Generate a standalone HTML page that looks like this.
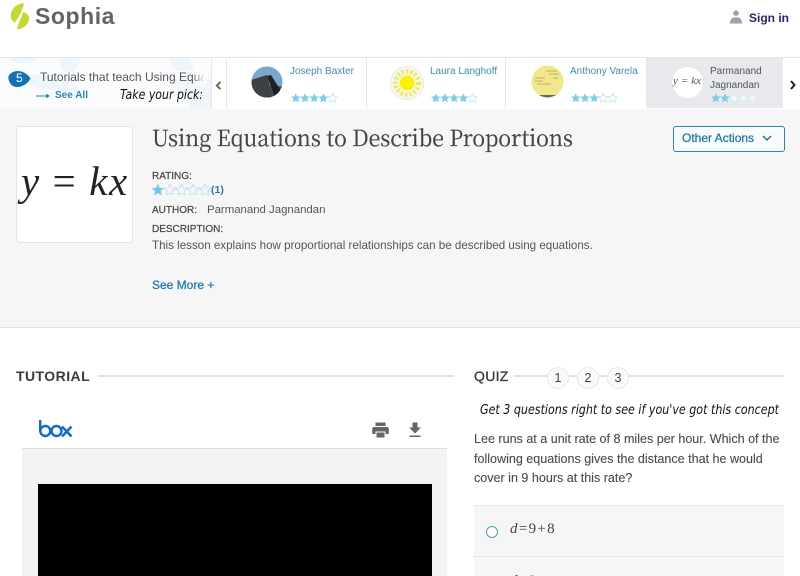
<!DOCTYPE html>
<html><head><meta charset="utf-8">
<style>
html,body{margin:0;padding:0;width:800px;height:576px;overflow:hidden;background:#fff;font-family:"Liberation Sans",sans-serif;color:#444}
#w{position:relative;width:800px;height:576px;overflow:hidden}
.a{position:absolute;white-space:nowrap}
.name{font-size:10px;color:#3f8db5;line-height:16px}
.lab{font-size:10px;color:#444;font-weight:400;-webkit-text-stroke:.2px #444}
svg{position:absolute}
.rule{position:absolute;height:2px;background:#e4e4e4}
.c{position:absolute;top:367px;width:20px;height:20px;border-radius:50%;background:#fafafa;border:1px solid #e8e8e8;font-size:12.5px;line-height:20px;text-align:center;color:#444}
</style></head><body><div id="w">

<!-- Header -->
<svg style="left:10px;top:3px" width="20" height="27" viewBox="0 0 20 27">
<path d="M14 0C6 1 .8 6 .8 13C.8 16 2.5 18.5 5 19.5C7 16 12 10 14 0Z" fill="#c5d92e"/>
<path d="M13 9C12 14 8 20 7 26.5C14 25.5 19 21 19 15C19 12 16 9.5 13 9Z" fill="#c5d92e"/>
</svg>
<div class="a" style="left:35px;top:1px;font-size:23px;font-weight:700;color:#636466;line-height:30px;letter-spacing:.55px">Sophia<span style="font-size:5px;font-weight:400">.</span></div>
<svg style="left:729px;top:10px" width="14" height="14" viewBox="0 0 14 14"><circle cx="7" cy="3.2" r="2.8" fill="#98a2ab"/><path d="M0.8 13.5C1 9 3.5 7.3 7 7.3S13 9 13.2 13.5Z" fill="#98a2ab"/></svg>
<div class="a" style="left:749px;top:9px;font-size:12px;font-weight:700;color:#2b2563;line-height:18px">Sign in</div>

<!-- Carousel -->
<div class="a" style="left:0;top:57px;width:800px;height:52px;background:#fff;border-top:1px solid #e3e3e3;border-bottom:1px solid #dcdcdc"></div>
<div class="a" style="left:0;top:58px;width:211px;height:51px;overflow:hidden">
<svg style="left:0;top:0" width="211" height="51"><path d="M0 0H211V51H0Z" fill="#fafcfe"/><path d="M8 0C18 8 30 6 38 0ZM60 0C58 14 70 20 78 8L80 0ZM20 18C40 12 70 24 85 32C65 36 30 34 20 18ZM170 0C168 10 178 16 194 12L190 0ZM172 22C190 18 205 24 211 20V51H190C186 36 176 34 172 22Z" fill="#eff6fb"/></svg>
</div>
<svg style="left:8px;top:70px" width="23" height="18" viewBox="0 0 23 18"><path d="M0.5 6C5 -1 16 -1 22.5 8.5C18 17 8 19 3.5 15C1 12.5 0 9 0.5 6Z" fill="#1272b5"/></svg>
<div class="a" style="left:16px;top:71px;font-size:12px;color:#fff;line-height:15px">5</div>
<div class="a" style="left:40px;top:69px;width:164px;overflow:hidden;font-size:12px;color:#555;line-height:16px">Tutorials that teach Using Equations to Describe</div>
<div class="a" style="left:192px;top:68px;width:14px;height:18px;background:linear-gradient(90deg,rgba(250,252,254,0),#fafcfe)"></div>
<svg style="left:36px;top:93px" width="14" height="6"><path d="M0 3H11" stroke="#1f7eb8" stroke-width="1"/><path d="M10 .8L14 3L10 5.2Z" fill="#1f7eb8"/></svg>
<div class="a" style="left:55px;top:89px;font-size:10px;font-weight:700;color:#2b83b7;line-height:14px">See All</div>
<svg style="left:120px;top:86px" width="84" height="18"><text x="0" y="13" font-size="13" textLength="83" lengthAdjust="spacingAndGlyphs" fill="#111" font-family="DejaVu Sans" font-style="oblique">Take your pick:</text></svg>

<div class="a" style="left:211px;top:58px;width:1px;height:50px;background:#e4e8ec"></div>
<svg style="left:215px;top:81px" width="7" height="9"><path d="M5.5 .8L1.8 4.5L5.5 8.2" fill="none" stroke="#6a6a6a" stroke-width="2"/></svg>
<div class="a" style="left:226px;top:58px;width:1px;height:50px;background:#e6e6e6"></div>
<div class="a" style="left:366px;top:58px;width:1px;height:50px;background:#e6e6e6"></div>
<div class="a" style="left:505px;top:58px;width:1px;height:50px;background:#e6e6e6"></div>
<div class="a" style="left:646px;top:58px;width:137px;height:50px;background:#e7e9ec"></div>

<!-- Avatars -->
<svg style="left:251px;top:66px" width="32" height="32" viewBox="0 0 32 32"><defs><clipPath id="av1"><circle cx="16" cy="16" r="15.5"/></clipPath></defs><g clip-path="url(#av1)"><rect width="32" height="32" fill="#7aa8cc"/><rect y="20" width="32" height="12" fill="#4a4f54"/><path d="M0 14L16 9L22 32H0Z" fill="#3c4146"/><path d="M16 10L20 9L32 28V32H24Z" fill="#1f2225"/></g></svg>
<svg style="left:390px;top:66px" width="34" height="34" viewBox="0 0 34 34"><circle cx="17" cy="17" r="16.5" fill="#f7f7f4" stroke="#e7e7e7"/><circle cx="17" cy="17" r="11.5" fill="none" stroke="#ecec60" stroke-width="5" stroke-dasharray="2.4 2"/><circle cx="17" cy="17" r="7.5" fill="#fbf200"/></svg>
<svg style="left:531px;top:65px" width="33" height="33" viewBox="0 0 33 33"><defs><clipPath id="av3"><circle cx="16.5" cy="16.5" r="16"/></clipPath></defs><g clip-path="url(#av3)"><rect width="33" height="33" fill="#f3e78e"/><rect y="30" width="33" height="3" fill="#6d6a52"/><path d="M4 13H14M4 16H12M6 19H20M15 6H26M18 9H28M22 13H27" stroke="#a8a35a" stroke-width=".7"/></g></svg>
<div class="a" style="left:672px;top:67px;width:31px;height:31px;border-radius:50%;background:#fff"></div>
<div class="a" style="left:673px;top:74px;font:italic 11px/14px 'Liberation Serif',serif;color:#555;letter-spacing:.1px">y = kx</div>

<!-- Names -->
<div class="a name" style="left:290px;top:64px">Joseph Baxter</div>
<div class="a name" style="left:430px;top:64px">Laura Langhoff</div>
<div class="a name" style="left:570px;top:64px">Anthony Varela</div>
<div class="a name" style="left:710px;color:#555;line-height:14px;top:65px">Parmanand<br>Jagnandan</div>

<!-- Stars -->
<svg width="0" height="0" style="position:absolute"><defs>
<path id="s" d="M5 0L6.4 3.3L10 3.6L7.3 6L8.1 9.5L5 7.7L1.9 9.5L2.7 6L0 3.6L3.6 3.3Z"/>
</defs></svg>
<svg style="left:291px;top:93px" width="46" height="10" viewBox="0 0 48 10" fill="#7dcde8"><use href="#s"/><use href="#s" x="9.6"/><use href="#s" x="19.2"/><use href="#s" x="28.8"/><use href="#s" x="38.4" fill="#fff" stroke="#a8dcee" stroke-width=".6"/></svg>
<svg style="left:431px;top:93px" width="46" height="10" viewBox="0 0 48 10" fill="#7dcde8"><use href="#s"/><use href="#s" x="9.6"/><use href="#s" x="19.2"/><use href="#s" x="28.8"/><use href="#s" x="38.4" fill="#fff" stroke="#a8dcee" stroke-width=".6"/></svg>
<svg style="left:571px;top:93px" width="46" height="10" viewBox="0 0 48 10" fill="#7dcde8"><use href="#s"/><use href="#s" x="9.6"/><use href="#s" x="19.2"/><use href="#s" x="28.8" fill="#fff" stroke="#a8dcee" stroke-width=".6"/><use href="#s" x="38.4" fill="#fff" stroke="#a8dcee" stroke-width=".6"/></svg>
<svg style="left:711px;top:93px" width="46" height="10" viewBox="0 0 48 10" fill="#7dcde8"><use href="#s"/><use href="#s" x="9.6"/><use href="#s" x="19.2" fill="#f4f6f8" stroke="#d5e8f0" stroke-width=".6"/><use href="#s" x="28.8" fill="#f4f6f8" stroke="#d5e8f0" stroke-width=".6"/><use href="#s" x="38.4" fill="#f4f6f8" stroke="#d5e8f0" stroke-width=".6"/></svg>

<svg style="left:790px;top:80px" width="6" height="10"><path d="M1 1L4.5 5L1 9" fill="none" stroke="#222" stroke-width="2"/></svg>

<!-- Lesson info -->
<div class="a" style="left:0;top:109px;width:800px;height:218px;background:#f6f6f6;border-bottom:1px solid #e3e3e3"></div>
<div class="a" style="left:16px;top:126px;width:115px;height:115px;background:#fff;border:1px solid #e4e4e4;border-radius:3px"></div>
<div class="a" style="left:21px;top:158px;font:italic 41px/46px 'Liberation Serif',serif;color:#222;letter-spacing:1.6px">y <span style="font-style:normal">=</span> kx</div>
<svg style="left:152px;top:124px" width="430" height="30"><text x="0" y="22" font-size="22.5" textLength="421" lengthAdjust="spacingAndGlyphs" fill="#444" stroke="#444" stroke-width=".25" font-family="Noto Serif CJK SC, Liberation Serif, serif">Using Equations to Describe Proportions</text></svg>

<div class="a" style="left:673px;top:126px;width:110px;height:24px;border:1px solid #2a83b5;border-radius:3px;background:#f8fbfc"></div>
<div class="a" style="left:682px;top:131px;font-size:12px;font-weight:400;color:#1f77a8;line-height:15px;-webkit-text-stroke:.25px #1f77a8">Other Actions</div>
<svg style="left:762px;top:135px" width="10" height="7"><path d="M1 1L5 5L9 1" fill="none" stroke="#1f77a8" stroke-width="1.5"/></svg>

<div class="a lab" style="left:152px;top:170px;line-height:14px">RATING:</div>
<svg style="left:152px;top:184px" width="59" height="11" viewBox="0 0 50 9.3" fill="#f6f6f6" stroke="#9fd8ea" stroke-width=".5"><use href="#s" fill="#6ec6e6"/><use href="#s" x="10"/><use href="#s" x="20"/><use href="#s" x="30"/><use href="#s" x="40"/></svg>
<div class="a" style="left:211px;top:183px;font-size:10.5px;font-weight:700;color:#2476a8;line-height:14px">(1)</div>
<div class="a lab" style="left:152px;top:204px;line-height:14px">AUTHOR:</div>
<div class="a" style="left:207px;top:203px;font-size:11.4px;color:#555;line-height:15px">Parmanand Jagnandan</div>
<div class="a lab" style="left:152px;top:223px;line-height:14px">DESCRIPTION:</div>
<div class="a" style="left:152px;top:238px;font-size:11.6px;color:#555;line-height:16px">This lesson explains how proportional relationships can be described using equations.</div>
<div class="a" style="left:152px;top:277px;font-size:12px;font-weight:400;color:#1e7cb8;line-height:16px;-webkit-text-stroke:.3px #1e7cb8">See More +</div>

<!-- Tutorial -->
<div class="a" style="left:16px;top:367px;font-size:14px;font-weight:700;color:#3a3a3a;line-height:18px;letter-spacing:.45px">TUTORIAL</div>
<div class="rule" style="left:98px;top:375px;width:356px"></div>
<svg style="left:39px;top:419px" width="34" height="19" viewBox="0 0 34 19"><g fill="none" stroke="#0e6ad0" stroke-width="2.4"><path d="M1.2 1V12"/><circle cx="6.3" cy="12" r="5"/><circle cx="17.5" cy="12" r="5"/><path d="M23 7.5L32.5 17.5M32.5 7.5L23 17.5"/></g></svg>
<svg style="left:372px;top:422px" width="17" height="16" viewBox="0 0 17 16" fill="#666"><rect x="3.5" y="0.5" width="10" height="3.5"/><path d="M2 5H15C16 5 16.8 5.8 16.8 7V12H13.5V9.5H3.5V12H.2V7C.2 5.8 1 5 2 5Z"/><rect x="4.5" y="10.5" width="8" height="5"/></svg>
<svg style="left:408px;top:422px" width="14" height="16" viewBox="0 0 14 16" fill="#666"><path d="M4.5 0.5H9.5V5.5H13L7 11.5L1 5.5H4.5Z"/><rect x="1.5" y="13.5" width="11" height="1.5"/></svg>
<div class="a" style="left:22px;top:448px;width:425px;height:128px;background:#f3f3f3;border-top:1px solid #dcdcdc"></div>
<div class="a" style="left:38px;top:484px;width:394px;height:92px;background:#000"></div>

<!-- Quiz -->
<div class="a" style="left:474px;top:367px;font-size:14px;color:#3a3a3a;line-height:18px;letter-spacing:.3px;-webkit-text-stroke:.3px #3a3a3a">QUIZ</div>
<div class="rule" style="left:514px;top:375px;width:270px"></div>
<div class="c" style="left:547px">1</div>
<div class="c" style="left:577px">2</div>
<div class="c" style="left:607px">3</div>
<svg style="left:480px;top:400px" width="300" height="20"><text x="0" y="14" font-size="13.5" textLength="299" lengthAdjust="spacingAndGlyphs" fill="#111" font-family="DejaVu Sans" font-style="oblique">Get 3 questions right to see if you've got this concept</text></svg>
<div class="a" style="left:474px;top:430px;font-size:12.55px;color:#4a4a4a;line-height:19.6px;-webkit-text-stroke:.1px #4a4a4a">Lee runs at a unit rate of 8 miles per hour. Which of the<br>following equations gives the distance that he would<br>cover in 9 hours at this rate?</div>
<div class="a" style="left:474px;top:505px;width:310px;height:71px;background:#f6f6f6;border-top:1px solid #e6e6e6"></div>
<div class="a" style="left:474px;top:556px;width:310px;height:1px;background:#e6e6e6"></div>
<div class="a" style="left:486px;top:526px;width:10px;height:10px;border:1.5px solid #4f9db5;border-radius:50%;background:#fff"></div>
<div class="a" style="left:510px;top:520px;font:15px/18px 'Liberation Serif',serif;color:#444;letter-spacing:1.3px"><i>d</i>=9+8</div>
<div class="a" style="left:510px;top:572px;font:15px/18px 'Liberation Serif',serif;color:#444;letter-spacing:1.3px"><i>d</i>=9</div>
</div></body></html>
